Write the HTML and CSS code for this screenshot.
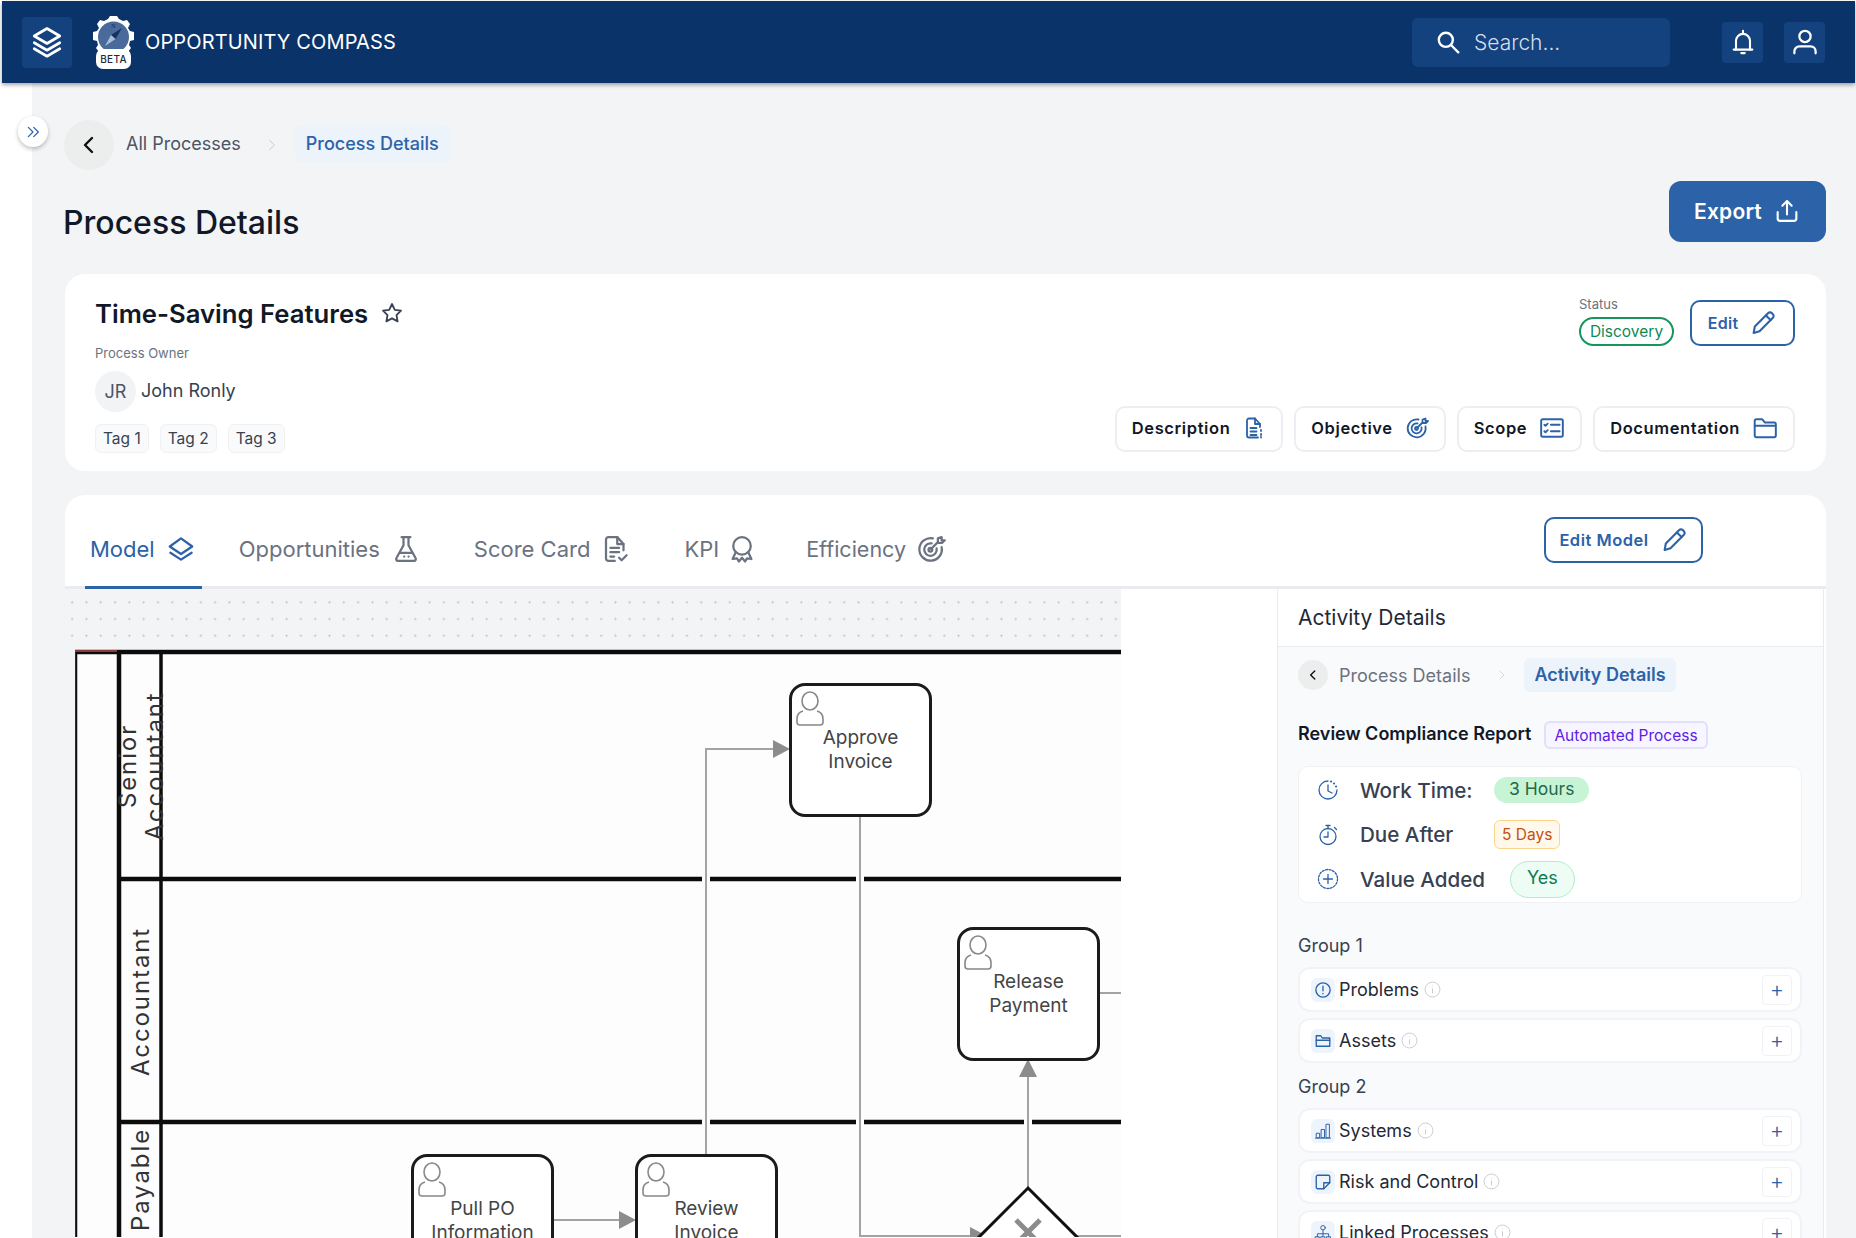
FILE: index.html
```html
<!DOCTYPE html>
<html lang="en">
<head>
    <meta charset="UTF-8">
    <title>Opportunity Compass</title>
    <link rel="stylesheet" href="styles.css">
</head>
<body>
    <header class="topbar">
        <div class="icon-btn layers-btn">
            <svg class="ico" width="36" height="36" viewBox="0 0 24 24"><path d="M12 3 3.500 8l8.500 5 8.500-5z"/><path d="M3.500 12.500l8.500 5 8.500-5"/><path d="M3.500 16.500l8.500 5 8.500-5"/></svg>
        </div>
        <svg class="logo" width="41" height="53" viewBox="0 0 41 53">
            <path fill="#fff" d="M15 3l2-3h7l2 3 4 2 4-1 3 4-2 4 2 3 4 1v8l-4 1-1 4 2 3-3 4-4 1H9l-3-1-3-4 2-3-1-4-4-1v-8l4-1 2-3-2-4 3-4 4 1z"/>
            <circle cx="20.500" cy="21" r="15.500" fill="#4a6a9c"/>
            <path fill="#16335f" d="M29 12l-6.500 11-4.500-4z"/>
            <path fill="#a9bcd6" d="M12 30l6-11 4.500 4z"/>
            <text x="20.500" y="12" text-anchor="middle" class="compass-n">N</text>
            <rect x="3" y="33" width="35" height="20" rx="7" fill="#fff"/>
            <text x="20.500" y="47" text-anchor="middle" class="beta">BETA</text>
        </svg>
        <div class="brand">OPPORTUNITY COMPASS</div>
        <div class="search">
            <svg class="ico" width="26" height="26" viewBox="0 0 24 24"><circle cx="10" cy="10" r="6.500"/><path d="M15 15l6.500 6.500"/></svg>
            <span>Search...</span>
        </div>
        <div class="icon-btn small-btn bell-btn">
            <svg class="ico" width="28" height="28" viewBox="0 0 24 24"><path d="M4 18.500h16"/><path d="M6 18.500V11a6 6 0 0 1 12 0v7.500"/><path d="M12 2.500V5"/><path d="M10.500 21.500h3"/></svg>
        </div>
        <div class="icon-btn small-btn">
            <svg class="ico" width="30" height="30" viewBox="0 0 24 24"><circle cx="12" cy="7.500" r="4.500"/><path d="M3.500 21v-1.500a4 4 0 0 1 4-4h9a4 4 0 0 1 4 4V21"/></svg>
        </div>
    </header>

    <div class="layout">
        <aside class="sidebar">
            <div class="side-toggle">
                <svg class="ico" width="16" height="16" viewBox="0 0 24 24"><path d="M5 5l7 7-7 7"/><path d="M13 5l7 7-7 7"/></svg>
            </div>
        </aside>

        <main class="main">
            <nav class="crumbs">
                <div class="back-btn">
                    <svg class="ico" width="24" height="24" viewBox="0 0 24 24"><path d="M15 5l-7 7 7 7"/></svg>
                </div>
                <span class="crumb">All Processes</span>
                <svg class="ico crumb-sep" width="14" height="14" viewBox="0 0 24 24"><path d="M8 4l8 8-8 8"/></svg>
                <span class="crumb-current">Process Details</span>
            </nav>

            <div class="title-row">
                <h1 class="page-title">Process Details</h1>
                <div class="export-btn">
                    Export
                    <svg class="ico" width="28" height="28" viewBox="0 0 24 24"><path d="M12 15V4"/><path d="M8 7.500 12 3.500l4 4"/><path d="M4 13v5.500a2 2 0 0 0 2 2h12a2 2 0 0 0 2-2V13"/></svg>
                </div>
            </div>

            <section class="card summary">
                <div class="summary-left">
                    <div class="summary-title">
                        <h2>Time-Saving Features</h2>
                        <svg class="ico" width="24" height="24" viewBox="0 0 24 24"><path d="M12 3l2.800 5.800 6.200.9-4.500 4.400 1.100 6.300L12 17.400l-5.600 3 1.100-6.300L3 9.700l6.200-.9z"/></svg>
                    </div>
                    <div class="owner-label">Process Owner</div>
                    <div class="owner">
                        <div class="avatar">JR</div>
                        <span>John Ronly</span>
                    </div>
                    <div class="tags">
                        <span class="tag">Tag 1</span>
                        <span class="tag">Tag 2</span>
                        <span class="tag">Tag 3</span>
                    </div>
                </div>
                <div class="summary-right">
                    <div class="status-row">
                        <div class="status">
                            <div class="status-label">Status</div>
                            <div class="status-pill">Discovery</div>
                        </div>
                        <div class="outline-btn edit-btn">
                            Edit
                            <svg class="ico" width="28" height="28" viewBox="0 0 24 24"><path d="M4 20.500l1-5.500L16.500 3.500a2.100 2.100 0 0 1 3 0l1 1a2.100 2.100 0 0 1 0 3L9 19z"/><path d="M14.500 5.500l4 4"/></svg>
                        </div>
                    </div>
                    <div class="doc-btns">
                        <div class="doc-btn">Description
                            <svg class="ico" width="24" height="24" viewBox="0 0 24 24"><path d="M18 11V8l-5-5.500H7a2 2 0 0 0-2 2v15a2 2 0 0 0 2 2h9"/><path d="M13 2.500V8h5"/><path d="M8.500 12h6M8.500 15.500h6M8.500 19h6M19 14v1M19 18v1M19 21v.5"/></svg>
                        </div>
                        <div class="doc-btn">Objective
                            <svg class="ico" width="24" height="24" viewBox="0 0 24 24"><path d="M20.500 10.500A9 9 0 1 1 13.500 3.500"/><path d="M16.500 11.500a5 5 0 1 1-4-4"/><circle cx="11.500" cy="12.500" r="1.500"/><path d="M12 12l5.500-5.500M17.500 6.500V3.500l3-1v2.500h2.500l-2 2h-3.500"/></svg>
                        </div>
                        <div class="doc-btn">Scope
                            <svg class="ico" width="26" height="26" viewBox="0 0 24 24"><rect x="2" y="4" width="20" height="16" rx="1.500"/><path d="M11 9h8M11 15h8"/><path d="M5 9l1 1 2-2M5 15l1 1 2-2"/></svg>
                        </div>
                        <div class="doc-btn">Documentation
                            <svg class="ico" width="26" height="26" viewBox="0 0 24 24"><path d="M2.500 19V5.500a1.500 1.500 0 0 1 1.500-1.500h5.500l2.500 3h8.500a1.500 1.500 0 0 1 1.500 1.500V19a1.500 1.500 0 0 1-1.500 1.500H4A1.500 1.500 0 0 1 2.500 19z"/><path d="M2.500 10h19"/></svg>
                        </div>
                    </div>
                </div>
            </section>

            <section class="card model">
                <div class="tabs">
                    <div class="tab tab-active">Model
                        <svg class="ico" width="30" height="30" viewBox="0 0 24 24"><path d="M12 3.500 3 10l9 6 9-6z"/><path d="M3.500 15l8.500 5.500 8.500-5.500"/></svg>
                    </div>
                    <div class="tab">Opportunities
                        <svg class="ico" width="30" height="30" viewBox="0 0 24 24"><path d="M8.500 2.500h7"/><path d="M10 2.500V9L4.500 19a1.500 1.500 0 0 0 1.300 2.500h12.400a1.500 1.500 0 0 0 1.300-2.500L14 9V2.500"/><path d="M7.500 15h9"/><path d="M10.500 18h.1M14 18h.1"/></svg>
                    </div>
                    <div class="tab">Score Card
                        <svg class="ico" width="30" height="30" viewBox="0 0 24 24"><path d="M11 21.500H6a2 2 0 0 1-2-2v-15a2 2 0 0 1 2-2h7l5 5.500v5"/><path d="M13 2.500V8h5"/><path d="M7.500 11h7M7.500 14.500h7M7.500 18h3"/><path d="M14.500 19l2 2 4-4"/></svg>
                    </div>
                    <div class="tab tab-kpi">KPI
                        <svg class="ico" width="30" height="30" viewBox="0 0 24 24"><circle cx="12" cy="9.500" r="7"/><path d="M7 14.500 4.500 20l3.500-.500 1.500 2.500 2.500-3 2.500 3 1.500-2.500 3.500.5-2.500-5.500"/></svg>
                    </div>
                    <div class="tab tab-last">Efficiency
                        <svg class="ico" width="30" height="30" viewBox="0 0 24 24"><path d="M20.500 10.500A9 9 0 1 1 13.500 3.500"/><path d="M16.500 11.500a5 5 0 1 1-4-4"/><circle cx="11.500" cy="12.500" r="1.500"/><path d="M12 12l5.500-5.500M17.500 6.500V3.500l3-1v2.500h2.500l-2 2h-3.500"/></svg>
                    </div>
                    <div class="outline-btn edit-model-btn">
                        Edit Model
                        <svg class="ico" width="28" height="28" viewBox="0 0 24 24"><path d="M4 20.500l1-5.500L16.500 3.500a2.100 2.100 0 0 1 3 0l1 1a2.100 2.100 0 0 1 0 3L9 19z"/><path d="M14.500 5.500l4 4"/></svg>
                    </div>
                </div>

                <div class="model-body">
                    <div class="canvas-wrap">
                        <div class="canvas">
                            <div class="dots"></div>
                            <div class="diagram">
                                <svg class="diagram-lines" width="1046" height="588" viewBox="0 0 1046 588">
                                    <g fill="none" stroke="#0c0c0c" stroke-width="4.500">
                                        <path d="M0 3H1046"/>
                                        <path d="M44 1V588"/>
                                        <path d="M86 1V588" stroke-width="3.500"/>
                                        <path d="M44 230H1046"/>
                                        <path d="M44 473H1046"/>
                                        <path d="M1 1V588" stroke-width="2.500"/>
                                    </g>
                                    <path d="M0 2H42" stroke="#8a3b3b" stroke-width="2"/>
                                    <path d="M0 1V588" stroke="#8a3b3b" stroke-width="1"/>
                                    <g fill="none" stroke="#fdfdfe" stroke-width="8">
                                        <path d="M631 226v8M785 226v8M631 469v8M785 469v8M953 469v8"/>
                                    </g>
                                    <g fill="none" stroke="#a3a3a3" stroke-width="2">
                                        <path d="M631 505V100H700"/>
                                        <path d="M785 166V587H900"/>
                                        <path d="M953 539V426"/>
                                        <path d="M478 571H546"/>
                                        <path d="M1024 344H1046"/>
                                        <path d="M994 587H1046"/>
                                    </g>
                                    <g fill="#8c8c8c">
                                        <path d="M698 91l17 9-17 9z"/>
                                        <path d="M544 562l17 9-17 9z"/>
                                        <path d="M895 578l17 9-17 9z"/>
                                        <path d="M953 410l9 18h-18z"/>
                                    </g>
                                    <path d="M953 539l49 49-49 49-49-49z" fill="#fff" stroke="#111" stroke-width="3"/>
                                    <path d="M941 571l24 24M965 571l-24 24" stroke="#8c8c8c" stroke-width="5" fill="none"/>
                                </svg>

                                <div class="lane-label senior">Senior<br>Accountant</div>
                                <div class="lane-label accountant">Accountant</div>
                                <div class="lane-label payable">Payable</div>

                                <div class="task approve">
                                    <svg class="person" width="30" height="36" viewBox="0 0 30 36"><ellipse cx="15" cy="10" rx="8" ry="9"/><path d="M8 20c-4 1-6 4-6 8v3a3 3 0 0 0 3 3h20a3 3 0 0 0 3-3v-3c0-4-2-7-6-8"/></svg>
                                    <div class="task-text">Approve<br>Invoice</div>
                                </div>
                                <div class="task release">
                                    <svg class="person" width="30" height="36" viewBox="0 0 30 36"><ellipse cx="15" cy="10" rx="8" ry="9"/><path d="M8 20c-4 1-6 4-6 8v3a3 3 0 0 0 3 3h20a3 3 0 0 0 3-3v-3c0-4-2-7-6-8"/></svg>
                                    <div class="task-text">Release<br>Payment</div>
                                </div>
                                <div class="task pull">
                                    <svg class="person" width="30" height="36" viewBox="0 0 30 36"><ellipse cx="15" cy="10" rx="8" ry="9"/><path d="M8 20c-4 1-6 4-6 8v3a3 3 0 0 0 3 3h20a3 3 0 0 0 3-3v-3c0-4-2-7-6-8"/></svg>
                                    <div class="task-text">Pull PO<br>Information</div>
                                </div>
                                <div class="task review">
                                    <svg class="person" width="30" height="36" viewBox="0 0 30 36"><ellipse cx="15" cy="10" rx="8" ry="9"/><path d="M8 20c-4 1-6 4-6 8v3a3 3 0 0 0 3 3h20a3 3 0 0 0 3-3v-3c0-4-2-7-6-8"/></svg>
                                    <div class="task-text">Review<br>Invoice</div>
                                </div>
                            </div>
                        </div>
                    </div>

                    <aside class="panel">
                        <div class="panel-head">Activity Details</div>
                        <div class="panel-body">
                            <nav class="panel-crumbs">
                                <div class="back-btn back-small">
                                    <svg class="ico" width="14" height="14" viewBox="0 0 24 24"><path d="M15 5l-7 7 7 7"/></svg>
                                </div>
                                <span class="crumb">Process Details</span>
                                <svg class="ico crumb-sep" width="12" height="12" viewBox="0 0 24 24"><path d="M8 4l8 8-8 8"/></svg>
                                <span class="crumb-current">Activity Details</span>
                            </nav>

                            <div class="activity-title">
                                <strong>Review Compliance Report</strong>
                                <span class="auto-badge">Automated Process</span>
                            </div>

                            <div class="info-card">
                                <div class="info-row">
                                    <svg class="ico" width="24" height="24" viewBox="0 0 24 24"><path d="M12 3a9 9 0 1 0 9 9"/><path d="M15 3.500h.1M18 5.500h.1M20 8.500h.1" stroke-width="2"/><path d="M12 7v6l4 2"/></svg>
                                    <span class="info-label">Work Time:</span>
                                    <span class="hours-pill">3 Hours</span>
                                </div>
                                <div class="info-row">
                                    <svg class="ico" width="24" height="24" viewBox="0 0 24 24"><circle cx="12" cy="13.500" r="8"/><path d="M12 9v5H8"/><path d="M10 2.500h4M12 2.500v3M18.500 4.500l2 2"/></svg>
                                    <span class="info-label">Due After</span>
                                    <span class="days-pill">5 Days</span>
                                </div>
                                <div class="info-row">
                                    <svg class="ico" width="24" height="24" viewBox="0 0 24 24"><circle cx="12" cy="12" r="9.500" stroke-dasharray="2 1.500"/><path d="M12 7.500v9M7.500 12h9"/></svg>
                                    <span class="info-label">Value Added</span>
                                    <span class="yes-pill">Yes</span>
                                </div>
                            </div>

                            <div class="group-label first">Group 1</div>
                            <div class="item-row">
                                <div class="item-icon"><svg class="ico" width="18" height="18" viewBox="0 0 24 24"><circle cx="12" cy="12" r="9.500"/><path d="M12 7v6M12 16.500v.5"/></svg></div>
                                <span>Problems</span>
                                <svg class="info-ico" width="17" height="17" viewBox="0 0 24 24"><circle cx="12" cy="12" r="10.500"/><path d="M12 10.500v7M12 6.500v1"/></svg>
                                <div class="plus-btn">+</div>
                            </div>
                            <div class="item-row">
                                <div class="item-icon"><svg class="ico" width="18" height="18" viewBox="0 0 24 24"><path d="M3 5h6l2 3h10v11H3z"/><path d="M3 11h18"/></svg></div>
                                <span>Assets</span>
                                <svg class="info-ico" width="17" height="17" viewBox="0 0 24 24"><circle cx="12" cy="12" r="10.500"/><path d="M12 10.500v7M12 6.500v1"/></svg>
                                <div class="plus-btn">+</div>
                            </div>

                            <div class="group-label">Group 2</div>
                            <div class="item-row">
                                <div class="item-icon"><svg class="ico thin" width="18" height="18" viewBox="0 0 24 24"><path d="M2 21.500h20"/><rect x="3.500" y="15" width="4" height="6"/><rect x="10" y="10" width="4" height="11"/><rect x="16.500" y="3" width="4" height="18"/></svg></div>
                                <span>Systems</span>
                                <svg class="info-ico" width="17" height="17" viewBox="0 0 24 24"><circle cx="12" cy="12" r="10.500"/><path d="M12 10.500v7M12 6.500v1"/></svg>
                                <div class="plus-btn">+</div>
                            </div>
                            <div class="item-row">
                                <div class="item-icon"><svg class="ico" width="18" height="18" viewBox="0 0 24 24"><path d="M13 21H5a2 2 0 0 1-2-2V5a2 2 0 0 1 2-2h14a2 2 0 0 1 2 2v8z"/><path d="M13 21v-8h8"/></svg></div>
                                <span>Risk and Control</span>
                                <svg class="info-ico" width="17" height="17" viewBox="0 0 24 24"><circle cx="12" cy="12" r="10.500"/><path d="M12 10.500v7M12 6.500v1"/></svg>
                                <div class="plus-btn">+</div>
                            </div>
                            <div class="item-row">
                                <div class="item-icon"><svg class="ico thin" width="18" height="18" viewBox="0 0 24 24"><circle cx="12" cy="5" r="3"/><path d="M12 8v5M4.500 17v-4h15v4M12 13v4"/><rect x="2" y="17" width="5" height="5"/><rect x="9.500" y="17" width="5" height="5"/><rect x="17" y="17" width="5" height="5"/></svg></div>
                                <span>Linked Processes</span>
                                <svg class="info-ico" width="17" height="17" viewBox="0 0 24 24"><circle cx="12" cy="12" r="10.500"/><path d="M12 10.500v7M12 6.500v1"/></svg>
                                <div class="plus-btn">+</div>
                            </div>
                        </div>
                    </aside>
                </div>
            </section>
        </main>
    </div>
</body>
</html>
```

FILE: styles.css
```css
* {
    margin: 0;
    padding: 0;
    box-sizing: border-box;
}

html,
body {
    height: 1238px;
    overflow: hidden;
}

body {
    background-color: #fff;
    font-family: Inter, 'Liberation Sans', sans-serif;
    color: #111827;
    display: flex;
    flex-direction: column;
}

.ico {
    fill: none;
    stroke: currentColor;
    stroke-width: 1.8;
    stroke-linecap: round;
    stroke-linejoin: round;
    flex: none;
}

.ico.thin {
    stroke-width: 1.3;
}

/* Top bar */
.topbar {
    position: relative;
    z-index: 2;
    flex: none;
    height: 82px;
    margin: 1px 1px 0 2px;
    padding: 0 30px 0 20px;
    background-color: #0a3369;
    box-shadow: 0 2px 4px rgba(0, 0, 0, 0.35);
    display: flex;
    align-items: center;
    color: #fff;
}

.icon-btn {
    display: flex;
    align-items: center;
    justify-content: center;
    background-color: #14427f;
    border-radius: 4px;
}

.layers-btn {
    width: 50px;
    height: 51px;
}

.small-btn {
    width: 41px;
    height: 41px;
    margin-left: 21px;
}

.bell-btn {
    margin-left: 52px;
}

.logo {
    margin-left: 21px;
}

.beta {
    font-size: 10px;
    font-weight: 500;
    fill: #1f2937;
    letter-spacing: 0.3px;
}

.compass-n {
    font-size: 6px;
    font-family: 'Liberation Serif', serif;
    fill: #10284f;
}

.brand {
    margin-left: 11px;
    font-size: 20px;
    letter-spacing: 0.13px;
    font-weight: 400;
}

.search {
    margin-left: auto;
    width: 258px;
    height: 49px;
    padding-left: 23px;
    background-color: #14427f;
    border-radius: 6px;
    display: flex;
    align-items: center;
    gap: 13px;
    font-size: 21px;
    font-weight: 300;
    color: #d3deec;
}

.search .ico {
    color: #fff;
    stroke-width: 2.2;
}

/* Main */
.layout {
    flex: 1;
    display: flex;
    min-height: 0;
}

.sidebar {
    flex: none;
    width: 32px;
    background-color: #fff;
    position: relative;
}

.side-toggle {
    position: absolute;
    top: 33px;
    left: 18px;
    width: 30px;
    height: 31px;
    border-radius: 50%;
    background-color: #fff;
    box-shadow: 0 2px 4px rgba(0, 0, 0, 0.25);
    color: #2b62a8;
    display: flex;
    align-items: center;
    justify-content: center;
}

.main {
    flex: 1;
    min-width: 0;
    padding: 37px 30px 0 33px;
    background-color: #f3f4f6;
}

.crumbs,
.panel-crumbs {
    display: flex;
    align-items: center;
}

.crumbs {
    margin-left: -1px;
    height: 50px;
}

.crumbs .crumb,
.crumbs .crumb-current {
    margin-bottom: 3px;
}

.back-btn {
    width: 50px;
    height: 50px;
    border-radius: 50%;
    background-color: #eceded;
    display: flex;
    align-items: center;
    justify-content: center;
    color: #111;
}

.back-btn .ico {
    stroke-width: 2.4;
}

.crumb {
    margin-left: 12px;
    font-size: 18px;
    color: #4b5563;
}

.crumb-sep {
    margin-left: 24px;
    color: #d1d5db;
}

.crumb-current {
    margin-left: 16px;
    padding: 8px 11px;
    background-color: #edf3fb;
    border-radius: 6px;
    font-size: 18px;
    font-weight: 500;
    color: #2b62a8;
}

.title-row {
    margin-top: 11px;
    height: 61px;
    display: flex;
    align-items: flex-end;
    justify-content: space-between;
}

.page-title {
    margin: 0 0 -2px -2px;
    font-size: 32px;
    line-height: 42px;
    font-weight: 500;
}

.export-btn {
    width: 157px;
    height: 61px;
    padding-bottom: 1px;
    background-color: #2b62a8;
    border-radius: 12px;
    color: #fff;
    font-size: 21px;
    letter-spacing: 0.2px;
    font-weight: 600;
    display: flex;
    align-items: center;
    justify-content: center;
    gap: 11px;
}

.card {
    background-color: #fff;
    border-radius: 20px;
}

/* Summary card */
.summary {
    margin-top: 32px;
    height: 197px;
    padding: 21px 31px 19px 30px;
    display: flex;
    justify-content: space-between;
}

.summary-title {
    display: flex;
    align-items: center;
    gap: 12px;
    height: 36px;
    color: #374151;
}

.summary-title h2 {
    font-size: 25.700px;
    font-weight: 600;
    color: #111827;
}

.owner-label {
    margin-top: 14px;
    font-size: 13px;
    line-height: 16px;
    color: #6b7280;
}

.owner {
    margin-top: 10px;
    display: flex;
    align-items: center;
    gap: 5px;
    font-size: 18px;
    color: #374151;
}

.owner span {
    margin-bottom: 2px;
}

.avatar {
    width: 41px;
    height: 41px;
    border-radius: 50%;
    background-color: #f1f3f5;
    display: flex;
    align-items: center;
    justify-content: center;
    color: #4b5563;
}

.tags {
    margin-top: 12px;
    display: flex;
    gap: 11px;
}

.tag {
    height: 29px;
    padding: 0 7px;
    border: 1px solid #f0f1f3;
    border-radius: 6px;
    background-color: #f9fafb;
    font-size: 15.500px;
    line-height: 27px;
    color: #374151;
}

.summary-right {
    padding-top: 1px;
    display: flex;
    flex-direction: column;
    justify-content: space-between;
    align-items: flex-end;
}

.status-row {
    display: flex;
    gap: 16px;
}

.status-label {
    font-size: 13px;
    line-height: 16px;
    color: #6b7280;
}

.status-pill {
    margin-top: 5px;
    width: 95px;
    height: 29px;
    border: 2px solid #16955d;
    border-radius: 15px;
    font-size: 15.500px;
    line-height: 26px;
    text-align: center;
    color: #0f8a55;
}

.outline-btn {
    border: 2px solid #2b62a8;
    border-radius: 10px;
    background-color: #fff;
    color: #2b62a8;
    font-size: 16px;
    letter-spacing: 0.3px;
    font-weight: 600;
    display: flex;
    align-items: center;
    justify-content: center;
    gap: 11px;
}

.edit-btn {
    margin-top: 4px;
    width: 105px;
    height: 46px;
}

.doc-btns {
    display: flex;
    gap: 11px;
}

.doc-btn {
    height: 46px;
    padding: 0 15px 2px;
    border: 2px solid #eceef3;
    border-radius: 10px;
    font-size: 16.500px;
    font-weight: 600;
    letter-spacing: 0.6px;
    color: #111827;
    display: flex;
    align-items: center;
    gap: 12px;
}

.doc-btn .ico {
    color: #2b62a8;
}

/* Model card */
.model {
    margin-top: 24px;
    height: 760px;
    border-radius: 20px 20px 0 0;
    overflow: hidden;
}

.tabs {
    height: 94px;
    padding: 0 123px 0 20px;
    border-bottom: 3px solid #e9ebef;
    display: flex;
    align-items: stretch;
    position: relative;
}

.tab {
    margin-right: 42px;
    padding: 16px 6px 0 5px;
    margin-bottom: -3px;
    border-bottom: 3px solid transparent;
    display: flex;
    align-items: center;
    gap: 11px;
    font-size: 22px;
    color: #6b7280;
}

.tab-active {
    margin-right: 32px;
    color: #2b62a8;
    border-bottom-color: #2b62a8;
}

.tab-kpi {
    margin-right: 38px;
    gap: 8px;
}

.tab-last {
    font-size: 21.500px;
    gap: 10px;
}

.edit-model-btn {
    margin: 22px 0 24px auto;
    width: 159px;
    height: 46px;
    font-size: 16.500px;
    letter-spacing: 0.5px;
}

.model-body {
    display: flex;
    height: 660px;
}

.canvas-wrap {
    flex: none;
    width: 1212px;
    background-color: #fff;
}

.canvas {
    width: 1056px;
    height: 100%;
    background-color: #f3f4f6;
}

.dots {
    height: 60px;
    background-image: radial-gradient(circle, #c4c8ce 0.9px, transparent 1.2px);
    background-size: 14.300px 16.700px;
    background-position: 0 5px;
}

.diagram {
    position: relative;
    margin-left: 10px;
    width: 1046px;
    height: 600px;
    background-color: #fdfdfe;
    overflow: hidden;
}

.diagram-lines {
    display: block;
    position: absolute;
    top: 0;
    left: 0;
}

.lane-label {
    position: absolute;
    transform: rotate(-90deg);
    transform-origin: center;
    font-size: 24px;
    letter-spacing: 1.9px;
    line-height: 27px;
    color: #333;
    text-align: center;
    white-space: nowrap;
}

.senior {
    left: -14px;
    top: 90px;
    width: 160px;
}

.accountant {
    left: -15px;
    top: 339px;
    width: 160px;
}

.payable {
    left: 1px;
    top: 517px;
    width: 128px;
}

.task {
    position: absolute;
    width: 143px;
    height: 134px;
    border: 3px solid #1b1b1b;
    border-radius: 16px;
    background-color: #fff;
}

.approve {
    left: 714px;
    top: 34px;
}

.release {
    left: 882px;
    top: 278px;
}

.pull {
    left: 336px;
    top: 505px;
}

.review {
    left: 560px;
    top: 505px;
}

.person {
    position: absolute;
    top: 5px;
    left: 3px;
    fill: none;
    stroke: #888;
    stroke-width: 1.6;
}

.task-text {
    padding-top: 40px;
    text-align: center;
    font-size: 19px;
    line-height: 24px;
    color: #444;
}

/* Activity panel */
.panel {
    flex: 1;
    margin-right: 2px;
    border-left: 1px solid #e9ebef;
    border-right: 1px solid #e9ebef;
    min-width: 0;
}

.panel-head {
    height: 58px;
    padding-left: 20px;
    border-bottom: 1px solid #e9ebef;
    font-size: 21px;
    line-height: 57px;
    color: #1f2937;
}

.panel-body {
    height: 610px;
    padding: 11px 20px 0;
    background-color: #f9fafb;
}

.panel-crumbs {
    height: 34px;
}

.back-small {
    width: 30px;
    height: 30px;
}

.panel-crumbs .crumb {
    font-size: 18px;
    color: #6b7280;
    margin-left: 11px;
}

.panel-crumbs .crumb-sep {
    margin-left: 26px;
}

.panel-crumbs .crumb-current {
    margin-left: 16px;
    font-size: 18px;
    line-height: 22px;
    padding: 6px 10px;
    font-weight: 600;
}

.activity-title {
    margin-top: 29px;
    height: 28px;
    display: flex;
    align-items: center;
    gap: 13px;
}

.activity-title strong {
    margin-bottom: 4px;
    font-size: 18px;
    font-weight: 600;
}

.auto-badge {
    height: 28px;
    padding: 0 8px;
    border: 2px solid #e3defc;
    border-radius: 6px;
    background-color: #f7f5ff;
    font-size: 15.500px;
    line-height: 25px;
    color: #5b21e6;
}

.info-card {
    margin-top: 17px;
    width: 504px;
    height: 137px;
    padding-top: 1px;
    border: 1px solid #f0f1f4;
    border-radius: 10px;
    background-color: #fff;
}

.info-row {
    height: 44.500px;
    padding-left: 17px;
    display: flex;
    align-items: center;
    color: #2b62a8;
}

.info-row .ico {
    stroke-width: 1.300;
}

.info-label {
    margin-left: 20px;
    width: 134px;
    font-size: 20.600px;
    font-weight: 500;
    color: #374151;
}

.hours-pill {
    height: 26px;
    padding: 0 15px;
    border-radius: 13px;
    background-color: #c8f4d6;
    font-size: 17.500px;
    line-height: 23px;
    color: #25684a;
}

.days-pill {
    height: 29px;
    padding: 0 7px;
    border: 1px solid #fbd58a;
    border-radius: 6px;
    background-color: #fff8eb;
    font-size: 15.500px;
    line-height: 28px;
    color: #c2500f;
}

.yes-pill {
    margin-left: 16px;
    height: 37px;
    padding: 0 16px;
    border: 1px solid #b4eccd;
    border-radius: 19px;
    background-color: #edfcf4;
    font-size: 18px;
    line-height: 31px;
    color: #0f7a52;
}

.group-label {
    margin-top: 12px;
    font-size: 18px;
    line-height: 24px;
    color: #374151;
}

.group-label.first {
    margin-top: 31px;
}

.item-row {
    margin-top: 9px;
    width: 504px;
    height: 45px;
    padding: 0 8px 0 11px;
    border: 2px solid #f1f3f6;
    border-radius: 12px;
    background-color: #fff;
    display: flex;
    align-items: center;
    font-size: 18px;
    color: #1f2937;
}

.item-row + .item-row {
    margin-top: 6px;
}

.item-icon {
    width: 24px;
    height: 24px;
    margin-right: 4px;
    border-radius: 6px;
    background-color: #eef4fc;
    color: #2b62a8;
    display: flex;
    align-items: center;
    justify-content: center;
}

.info-ico {
    margin-left: 5px;
    fill: none;
    stroke: #c9cdd3;
    stroke-width: 1.4;
}

.plus-btn {
    margin-left: auto;
    width: 30px;
    height: 30px;
    border: 1px solid #f1f2f5;
    border-radius: 4px;
    background-color: #fff;
    color: #2b62a8;
    font-size: 22px;
    font-weight: 300;
    line-height: 27px;
    text-align: center;
}
```
